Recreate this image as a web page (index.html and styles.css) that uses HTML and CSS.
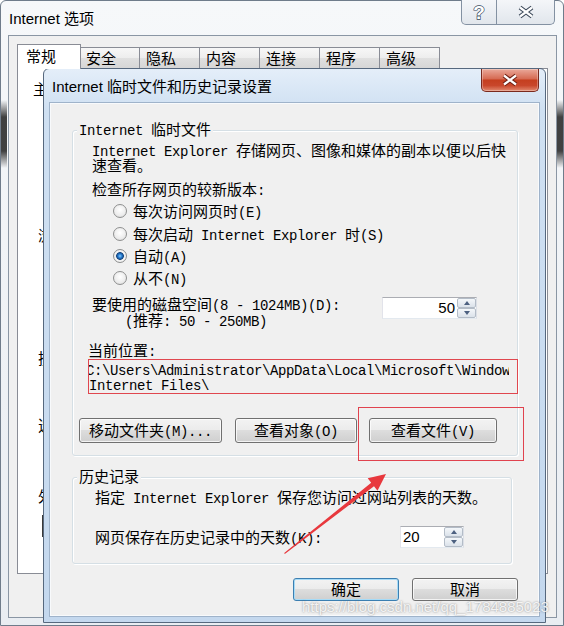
FILE: index.html
```html
<!DOCTYPE html>
<html>
<head>
<meta charset="UTF-8">
<title>Internet 选项</title>
<link rel="stylesheet" href="styles.css">
</head>
<body>
<div class="win">
    <div class="win-top">
        <span class="win-title">Internet 选项</span>
        <div class="caps">
            <span class="cap cap-help"><svg width="20" height="22" viewBox="0 0 20 22"><text x="10" y="18" text-anchor="middle">?</text></svg></span>
            <span class="cap cap-close"><svg width="18" height="14" viewBox="0 0 18 14"><path class="x-out" d="M3 2.5L15 11.5M15 2.5L3 11.5"/><path class="x-in" d="M3 2.5L15 11.5M15 2.5L3 11.5"/></svg></span>
        </div>
    </div>
    <div class="win-client">
        <ul class="tabs">
            <li class="on">常规</li>
            <li>安全</li>
            <li>隐私</li>
            <li>内容</li>
            <li>连接</li>
            <li>程序</li>
            <li>高级</li>
        </ul>
        <div class="tab-page">
            <span class="bh bh-home">主页</span>
            <span class="bh bh-hist">浏览历史记录</span>
            <span class="bh bh-search">搜索</span>
            <span class="bh bh-tabs">选项卡</span>
            <span class="bh bh-look">外观</span>
            <span class="bh-btn"></span>
        </div>
    </div>
</div>

<div class="dlg">
    <div class="dlg-top">
        <span class="dlg-title">Internet 临时文件和历史记录设置</span>
        <span class="dlg-close"><svg width="18" height="14" viewBox="0 0 18 14"><path class="x-out red" d="M3 2.5L15 11.5M15 2.5L3 11.5"/><path class="x-in" d="M3 2.5L15 11.5M15 2.5L3 11.5"/></svg></span>
    </div>
    <div class="dlg-client">
        <div class="grp grp-cache">
            <div class="grp-title"><span class="en">Internet </span>临时文件</div>
            <p class="desc"><span class="en">Internet Explorer </span>存储网页、图像和媒体的副本以便以后快<br>速查看。</p>
            <p class="ask">检查所存网页的较新版本<span class="en">:</span></p>
            <ul class="radios">
                <li><i class="radio"></i><span>每次访问网页时<span class="en">(E)</span></span></li>
                <li><i class="radio"></i><span>每次启动<span class="en"> Internet Explorer </span>时<span class="en">(S)</span></span></li>
                <li><i class="radio on"></i><span>自动<span class="en">(A)</span></span></li>
                <li><i class="radio"></i><span>从不<span class="en">(N)</span></span></li>
            </ul>
            <div class="disk">
                <p class="disk-label">要使用的磁盘空间<span class="en">(8 - 1024MB)(D):</span><br><span class="indent"><span class="en">(</span>推荐<span class="en">: 50 - 250MB)</span></span></p>
                <div class="spin spin-disk"><span class="spin-val">50</span><span class="spin-btns"><i class="up"></i><i class="down"></i></span></div>
            </div>
            <p class="loc-label">当前位置<span class="en">:</span></p>
            <div class="loc"><span class="loc-text en">C:\Users\Administrator\AppData\Local\Microsoft\Windows\Temporary<br>Internet Files\</span></div>
            <div class="btn-row">
                <button class="btn btn-move"><span>移动文件夹<span class="en">(M)...</span></span></button>
                <button class="btn btn-obj"><span>查看对象<span class="en">(O)</span></span></button>
                <button class="btn btn-file"><span>查看文件<span class="en">(V)</span></span></button>
            </div>
        </div>
        <div class="grp grp-hist">
            <div class="grp-title">历史记录</div>
            <p class="desc">指定<span class="en"> Internet Explorer </span>保存您访问过网站列表的天数。</p>
            <div class="days">
                <span class="days-label">网页保存在历史记录中的天数<span class="en">(K):</span></span>
                <div class="spin spin-days"><span class="spin-val">20</span><span class="spin-btns"><i class="up"></i><i class="down"></i></span></div>
            </div>
        </div>
        <div class="dlg-btns">
            <button class="btn btn-ok">确定</button>
            <button class="btn btn-cancel">取消</button>
        </div>
    </div>
</div>

<div class="marks">
    <svg width="564" height="626" viewBox="0 0 564 626">
        <rect x="358.5" y="407.5" width="165" height="53" fill="none" stroke="#e0424e"/>
        <polygon points="284.2,553.1 371.2,482.8 367.7,478.2 386,474 377.5,490.8 374,486.2 284.8,553.9" fill="#e8383d"/>
    </svg>
    <span class="wm">https://blog.csdn.net/qq_1784885023</span>
</div>
</body>
</html>
```

FILE: styles.css
```css
*{margin:0;padding:0;box-sizing:border-box;}
body{width:564px;height:626px;position:relative;overflow:hidden;background:#fff;font:15px "Noto Sans CJK SC",sans-serif;color:#000;}
ul{list-style:none;}
button{font:inherit;color:inherit;}
.en{font-family:"Liberation Mono",monospace;font-size:14px;letter-spacing:-0.4px;line-height:0;}

/* 底下的 Internet 选项 窗口 */
.win{width:564px;height:626px;border:1px solid #6f7c8b;border-radius:6px 6px 0 0;padding:0 6px 7px 7px;display:flex;flex-direction:column;
    background:
        linear-gradient(rgba(45,45,45,0),rgba(45,45,45,.9) 25%,rgba(45,45,45,.9) 75%,rgba(45,45,45,0)) 0 99px/6px 68px no-repeat,
        linear-gradient(rgba(45,45,45,0),rgba(45,45,45,.9) 25%,rgba(45,45,45,.9) 75%,rgba(45,45,45,0)) 556px 99px/6px 68px no-repeat,
        linear-gradient(#f6f8fa,#e9edf2);}
.win-top{height:34px;display:flex;align-items:flex-start;}
.win-title{margin:8px 0 0 1px;line-height:20px;font-family:"Liberation Sans","Noto Sans CJK SC",sans-serif;}
.caps{margin:-1px 2px 0 auto;display:flex;}
.cap{height:25px;display:flex;align-items:center;justify-content:center;border:1px solid #8391a2;border-top:0;background:linear-gradient(#f4f6f9,#e1e6ec);}
.cap-help{width:36px;border-radius:0 0 0 5px;}
.cap-close{width:58px;border-left:0;border-radius:0 0 5px 0;}
.cap-help text{font:bold 19px "Liberation Sans",sans-serif;fill:#fff;stroke:#34465b;stroke-width:1.3px;paint-order:stroke;}
.x-out{fill:none;stroke:#3b4859;stroke-width:4.4;}
.x-out.red{stroke:#6e2114;}
.x-in{fill:none;stroke:#fff;stroke-width:2.2;}

.win-client{flex:1;border:1px solid #8a96a4;background:#f0f0f0;padding:8px 8px 0;display:flex;flex-direction:column;}
.tabs{display:flex;align-items:flex-end;height:24px;padding-left:2px;}
.tabs li{width:61px;height:21px;margin-right:-1px;border:1px solid #898c95;border-bottom:0;padding-left:6px;line-height:20px;
    background:linear-gradient(#f7f7f7,#ededed 50%,#e0e0e0 50%,#d6d6d6);}
.tabs li.on{width:64px;height:25px;margin:0 -2px -1px -2px;padding-left:8px;line-height:22px;background:#fff;position:relative;z-index:1;}
.tab-page{flex:0 0 506px;background:#fff;border:1px solid #898c95;display:flex;flex-direction:column;align-items:flex-start;}
.bh{line-height:16px;margin-left:20px;white-space:nowrap;}
.bh-home{margin:12px 0 0 15px;}
.bh-hist{margin-top:130px;}
.bh-search{margin-top:107px;}
.bh-tabs{margin-top:51px;}
.bh-look{margin-top:55px;}
.bh-btn{width:2px;height:22px;margin:11px 0 0 24px;background:#3a3a3a;}

/* 临时文件和历史记录设置 对话框 */
.dlg{position:absolute;left:43px;top:68px;width:503px;height:555px;border:1px solid #56687e;border-radius:6px 6px 0 0;padding:0 6px 6px;display:flex;flex-direction:column;
    background:linear-gradient(#e4eef9,#cfe0f2 40px,#c4d8ee);}
.dlg-top{height:34px;display:flex;align-items:flex-start;}
.dlg-title{margin:8px 0 0 2px;line-height:20px;font-family:"Liberation Sans","Noto Sans CJK SC",sans-serif;}
.dlg-close{margin-left:auto;width:58px;height:23px;border:1px solid #7a2a1e;border-top:0;border-radius:0 0 5px 5px;display:flex;align-items:center;justify-content:center;
    background:linear-gradient(#eaa99a,#d66a52 45%,#c53f1f 50%,#c9472b 75%,#e28a70);box-shadow:inset 0 0 0 1px rgba(255,255,255,.3);}
.dlg-client{flex:1;border:1px solid #f8fafc;box-shadow:0 0 0 1px #9fb3ca;background:#f0f0f0;display:flex;flex-direction:column;align-items:flex-start;}

.grp{border:1px solid #d5dfe5;border-radius:3px;box-shadow:inset 1px 1px 0 #fff,1px 1px 0 #fff;}
.grp-title{display:table;margin:-10px 0 0 -15px;padding:0 2px;line-height:16px;background:#f0f0f0;}
.grp-cache{margin:26px 0 0 21px;width:446px;padding:0 0 12px 19px;}
.grp-hist{margin:21px 0 0 21px;width:440px;padding:0 0 15px 22px;}
.grp-hist .grp-title{margin-left:-18px;}
.desc{margin-top:5px;line-height:15px;}
.ask{margin-top:9px;line-height:15px;}
.radios{margin-top:4px;}
.radios li{height:22.4px;display:flex;align-items:center;padding-left:21px;line-height:16px;}
.radio{width:14px;height:14px;margin-right:6px;border:1px solid #8e8f8f;border-radius:50%;
    background:radial-gradient(circle at 50% 40%,#fff,#ececec 60%,#d4d4d4);}
.radio.on{background:radial-gradient(circle at 50% 50%,#8fd0f8 0,#2a80d6 1.8px,#14457f 3.5px,#e8e8e8 4.2px,#f9f9f9 5.2px,#d6d6d6 7px);}
.disk{display:flex;margin-top:6px;}
.disk-label{width:290px;line-height:16px;}
.indent{padding-left:33px;}
.spin{display:flex;height:22px;border:1px solid;border-color:#abadb3 #dbdfe6 #e3e9ef #e2e3ea;background:#fff;}
.spin-disk{width:95px;margin-top:1px;}
.spin-days{width:64px;}
.spin-val{flex:1;font:15px/20px "Liberation Sans",sans-serif;text-align:right;padding-right:2px;}
.spin-days .spin-val{text-align:left;padding:0 0 0 2px;}
.spin-btns{width:19px;display:flex;flex-direction:column;}
.spin-btns i{flex:1;display:flex;align-items:center;justify-content:center;border:1px solid #b3bcc7;border-radius:2px;background:linear-gradient(#f4f7fa,#dbe2ea);}
.up::after{content:"";border:3.5px solid transparent;border-top:0;border-bottom:4px solid #4c6080;}
.down::after{content:"";border:3.5px solid transparent;border-bottom:0;border-top:4px solid #4c6080;}
.loc-label{margin:14px 0 0 -4px;line-height:16px;}
.loc{margin:1px 0 0 -4px;width:430px;height:35px;border:1px solid #e0474f;padding:4px 8px 0 0;overflow:hidden;}
.loc-text{display:block;line-height:15px;white-space:nowrap;overflow:hidden;text-indent:-3px;}
.btn-row{display:flex;margin:24px 0 0 -13px;}
.btn{height:25px;display:flex;align-items:center;justify-content:center;line-height:16px;border:1px solid #707070;border-radius:3px;
    background:linear-gradient(#f3f3f3,#ebebeb 50%,#dddddd 50%,#cfcfcf);box-shadow:inset 0 0 0 1px rgba(255,255,255,.75);}
.btn-move{width:143px;}
.btn-obj{width:122px;margin-left:13px;}
.btn-file{width:128px;margin-left:12px;}
.days{display:flex;align-items:center;height:22px;margin-top:22px;line-height:16px;}
.days-label{width:305px;}
.dlg-btns{align-self:stretch;display:flex;justify-content:flex-end;gap:13px;margin-top:14px;padding-right:20px;}
.btn-ok,.btn-cancel{width:106px;height:23px;}
.btn-ok{border-color:#3c7fb1;box-shadow:inset 0 0 0 1px #a6dbf7;}

/* 截图上的标注 */
.marks{position:absolute;left:0;top:0;width:564px;height:626px;pointer-events:none;}
.marks svg{display:block;}
.wm{position:absolute;left:302px;top:597px;font:15px/20px "Liberation Sans",sans-serif;color:rgba(255,255,255,.85);text-shadow:0 0 2px rgba(90,90,90,.7);white-space:nowrap;}
```
